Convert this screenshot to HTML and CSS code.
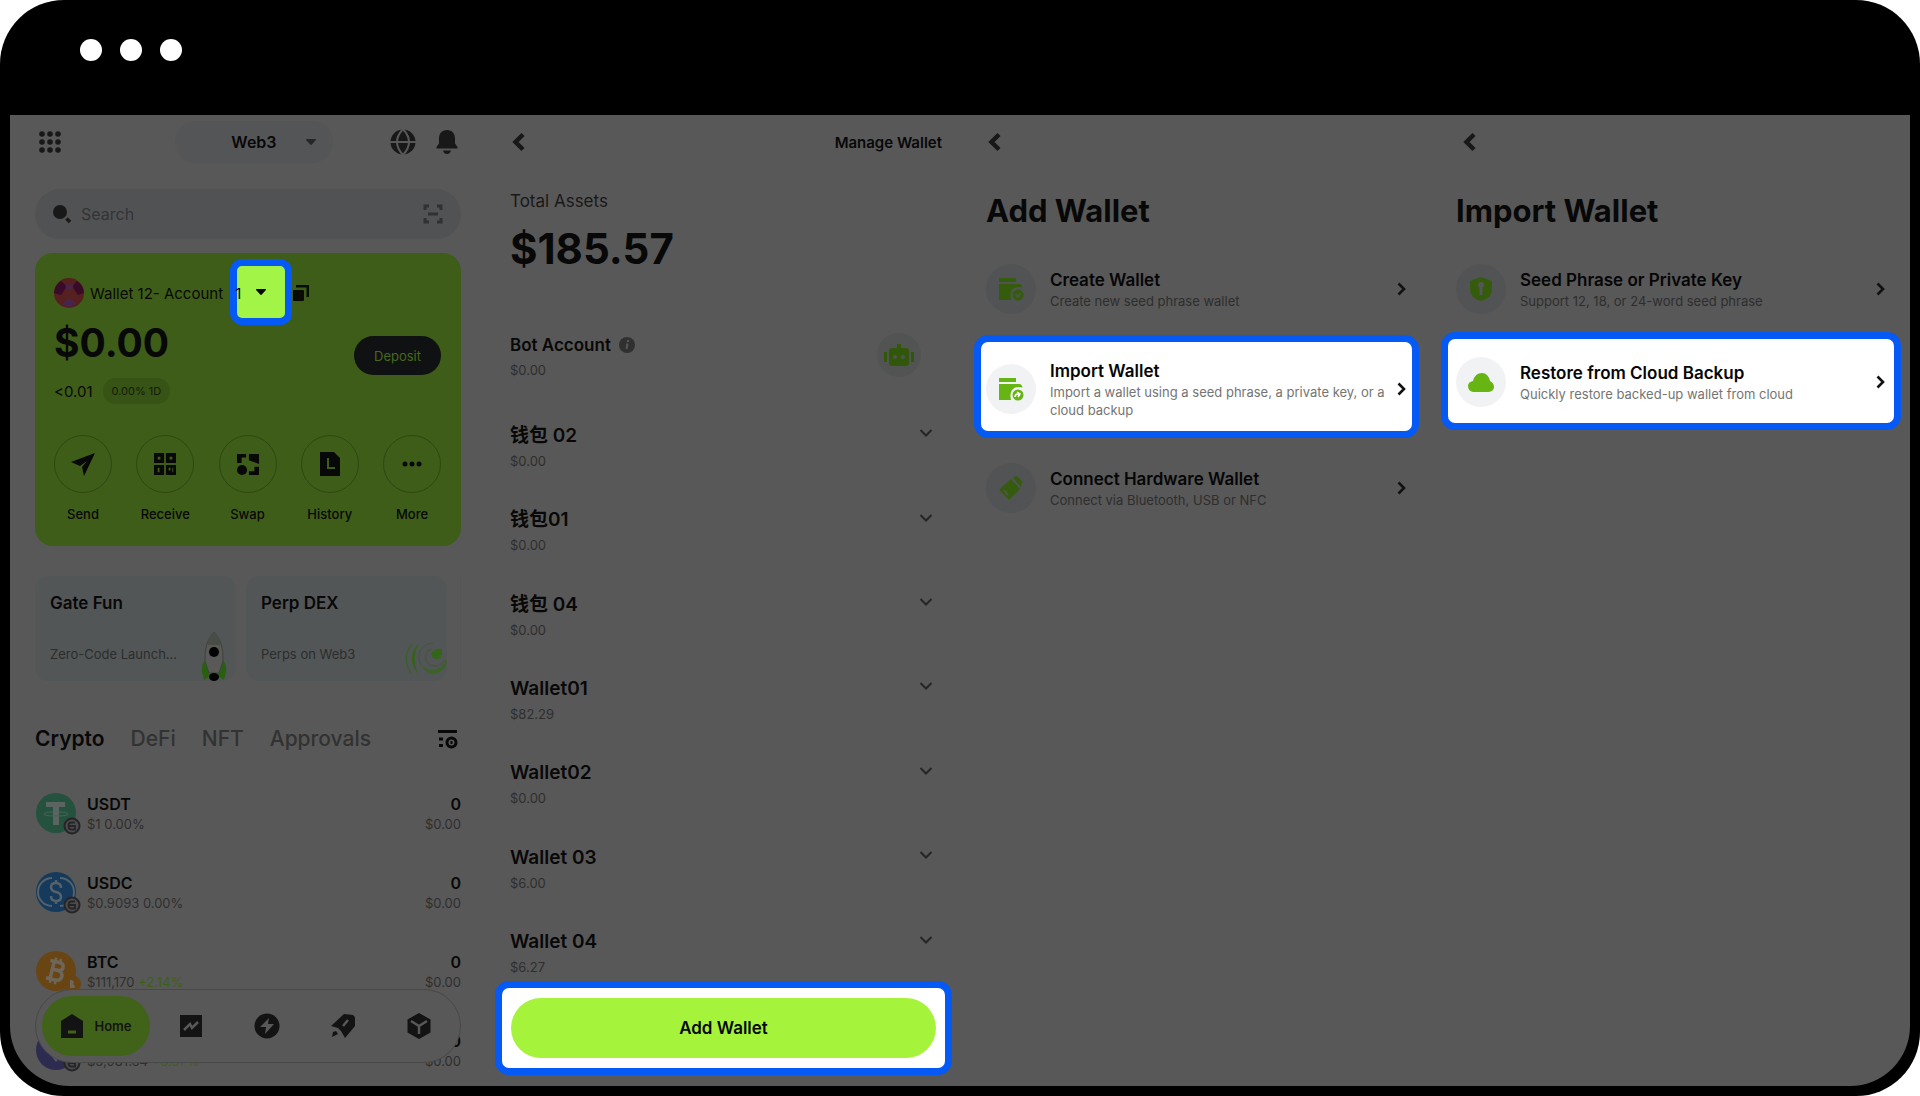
FILE: index.html
```html
<!DOCTYPE html>
<html lang="en">

<head>
    <meta charset="UTF-8">
    <meta name="viewport" content="width=device-width, initial-scale=1.0">
    <title>Import Wallet</title>
    <link rel="stylesheet" href="styles.css">
</head>

<body>
    <!-- shared icons -->
    <svg class="sprite" aria-hidden="true">
        <symbol id="back" viewBox="0 0 14 20"><path d="M11 2.500 3.500 10l7.500 7.500" fill="none" stroke="currentColor" stroke-width="4.500"/></symbol>
        <symbol id="next" viewBox="0 0 10 14"><path d="M1.500 1.500 7 7l-5.500 5.500" fill="none" stroke="currentColor" stroke-width="2.600"/></symbol>
        <symbol id="down" viewBox="0 0 14 10"><path d="M1.500 2 7 7.500 12.500 2" fill="none" stroke="currentColor" stroke-width="2"/></symbol>
        <symbol id="caret" viewBox="0 0 10 6"><path d="M.5 0h9q.8.600.2 1.300L5.800 5.600q-.8.700-1.600 0L.3 1.300Q-.3.600.5 0z" fill="currentColor"/></symbol>
        <symbol id="wallet" viewBox="0 0 26 26">
            <path d="M1 2h17v4H1zM1 8h20q3 0 3.500 3.500Q17 10 14 14q-2.500 4-1 10H1z" fill="currentColor"/>
            <circle cx="20" cy="19" r="5.500" fill="currentColor"/>
        </symbol>
        <symbol id="chain" viewBox="0 0 18 18">
            <circle cx="9" cy="9" r="7.500" fill="#4c4c4e" stroke="#252527" stroke-width="2"/>
            <path d="M12 5.500H8q-2.500 0-2.500 3.500T8 12.500h4V9H6" fill="none" stroke="#252527" stroke-width="1.800"/>
        </symbol>
    </svg>

    <div class="window">
        <div class="window-bar">
            <span class="dot"></span><span class="dot"></span><span class="dot"></span>
        </div>

        <main class="screens">
            <!-- Home -->
            <section class="screen home">
                <div class="topbar">
                    <button class="icon-btn" aria-label="Apps">
                        <svg width="22" height="22" viewBox="0 0 22 22" fill="currentColor"><circle cx="3" cy="3" r="2.800"/><circle cx="11" cy="3" r="2.800"/><circle cx="19" cy="3" r="2.800"/><circle cx="3" cy="11" r="2.800"/><circle cx="11" cy="11" r="2.800"/><circle cx="19" cy="11" r="2.800"/><circle cx="3" cy="19" r="2.800"/><circle cx="11" cy="19" r="2.800"/><circle cx="19" cy="19" r="2.800"/></svg>
                    </button>
                    <button class="mode">Web3 <svg width="10" height="6"><use href="#caret"/></svg></button>
                    <div class="topbar-end">
                        <button class="icon-btn" aria-label="Network">
                            <svg width="26" height="26" viewBox="0 0 26 26" fill="none" stroke="#585858" stroke-width="2"><circle cx="13" cy="13" r="12.500" fill="currentColor" stroke="none"/><path d="M13 0Q1 13 13 26 25 13 13 0zM0 13h26"/></svg>
                        </button>
                        <button class="icon-btn" aria-label="Notifications">
                            <svg width="22" height="26" viewBox="0 0 22 26" fill="currentColor"><path d="M11 1c5 0 8 3.500 8 8.500v5l2.500 3.500v1.500H.5V18L3 14.500v-5C3 4.500 6 1 11 1zM7 21.500h8q-1 3.500-4 3.500t-4-3.500z"/></svg>
                        </button>
                    </div>
                </div>

                <label class="search">
                    <svg width="20" height="20" viewBox="0 0 20 20"><circle cx="7" cy="8" r="7" fill="currentColor"/><path d="m13.500 14.500 3.500 3.500" stroke="currentColor" stroke-width="3.500"/></svg>
                    <input type="search" placeholder="Search" aria-label="Search">
                    <svg class="scan" width="20" height="20" viewBox="0 0 20 20" fill="none" stroke="currentColor" stroke-width="3"><path d="M2 6V2h4M14 2h4v4M18 14v4h-4M6 18H2v-4M5 10h10"/></svg>
                </label>

                <div class="balance-card">
                    <div class="account">
                        <svg width="30" height="30" viewBox="0 0 30 30"><circle cx="15" cy="15" r="15" fill="#55201f"/><path d="M0 15A15 15 0 0 1 7 3l6 5-6 9zM30 15a15 15 0 0 0-7-12l-5 5 6 9z" fill="#3a0a29"/><path d="M8 26q7-10 14 0-7 6-14 0z" fill="#47244a"/><path d="m11 5 4 3 5-3-2 6h-6z" fill="#47244a"/></svg>
                        <span class="account-name">Wallet 12- Account <span class="account-no">1</span></span>
                        <button class="account-switch" aria-label="Switch account"><svg width="10" height="6"><use href="#caret"/></svg></button>
                        <button class="icon-btn copy" aria-label="Copy address">
                            <svg width="16" height="16" viewBox="0 0 16 16" fill="currentColor"><rect y="5" width="11" height="11" rx="1"/><path d="M3 0h13v12h-2.500V2.500H3z"/></svg>
                        </button>
                    </div>
                    <div class="balance">
                        <div>
                            <div class="amount">$0.00</div>
                            <div class="change">&lt;0.01 <span class="badge">0.00% 1D</span></div>
                        </div>
                        <button class="deposit">Deposit</button>
                    </div>
                    <div class="actions">
                        <button class="action"><span class="ring"><svg width="24" height="24" viewBox="0 0 24 24" fill="currentColor"><path d="M24 1 13 24l-2-9 5-6-7 5-9-4z"/></svg></span>Send</button>
                        <button class="action"><span class="ring"><svg width="22" height="24" viewBox="0 0 24 24" fill="currentColor" fill-rule="evenodd"><path d="M0 0h11v11H0zM4 4v3h3V4zM13 0h11v11H13zM17 4v3h3V4zM0 13h11v11H0zM4 16v5h2v-5zM13 13h11v11H13zM16 16v3h2v-3zM20 16v5h1v-5z"/></svg></span>Receive</button>
                        <button class="action"><span class="ring"><svg width="22" height="24" viewBox="0 0 24 24" fill="currentColor"><path d="M0 1h10v4H5v6H0zM13 1h11v11l-5-2-6-2zM19 15h5v9H13v-4h6z"/><circle cx="5.500" cy="18.500" r="5.500"/></svg></span>Swap</button>
                        <button class="action"><span class="ring"><svg width="22" height="24" viewBox="0 0 22 24" fill="currentColor" fill-rule="evenodd"><path d="M1 0h14l6 6v18H1zM8 6v11h8v-2h-6V6z"/></svg></span>History</button>
                        <button class="action"><span class="ring"><svg width="20" height="6" viewBox="0 0 20 6" fill="currentColor"><circle cx="3" cy="3" r="2.500"/><circle cx="10" cy="3" r="2.500"/><circle cx="17" cy="3" r="2.500"/></svg></span>More</button>
                    </div>
                </div>

                <div class="promos">
                    <a class="promo" href="#">
                        <strong>Gate Fun</strong><span>Zero-Code Launch...</span>
                        <svg class="rocket" width="26" height="50" viewBox="0 0 26 50"><path d="M5 28q-5 5-4 13l2 8 6-4zM21 28q5 5 4 13l-2 8-6-4z" fill="#28600f"/><path d="M13 1q10 10 9 29l-4 12H8L4 30Q3 11 13 1z" fill="#595a58" stroke="#3d423b"/><path d="M13 1q5 4 7 13H6q2-9 7-13z" fill="#484e45"/><circle cx="13" cy="21" r="5" fill="#030303"/><ellipse cx="13" cy="46" rx="5" ry="4" fill="#030303"/></svg>
                    </a>
                    <a class="promo" href="#">
                        <strong>Perp DEX</strong><span>Perps on Web3</span>
                        <svg class="swirl" width="44" height="36" viewBox="0 0 44 36" fill="none"><path d="M7 3Q-4 17 6 32" stroke="#3a6029" stroke-width="1.500"/><path d="M14 2Q0 16 13 33 6 17 14 2z" fill="#36621f"/><path d="M28 2C15 3 11 15 16 24" stroke="#4a5446" stroke-width="1.500"/><path d="M16 24q9 16 23 4 3-4 3-10-6 11-14 11-7 0-12-5z" fill="#3b6329"/><path d="M27 8c-9 2-9 16 2 17 6 0 9-3 11-6" stroke="#4c5448" stroke-width="2"/><path d="M26 13q3-6 11-5 1 11-6 10-4-1-5-5z" fill="#34661a"/></svg>
                    </a>
                </div>

                <nav class="tabs">
                    <a class="current" href="#">Crypto</a>
                    <a href="#">DeFi</a>
                    <a href="#">NFT</a>
                    <a href="#">Approvals</a>
                    <button class="icon-btn" aria-label="Manage tokens">
                        <svg width="20" height="20" viewBox="0 0 20 20" fill="none" stroke="currentColor" stroke-width="3"><path d="M0 2.500h19M1 10h4M1 16.500h4"/><circle cx="13.500" cy="13.500" r="4.500"/><path d="M12.500 13.500h2"/></svg>
                    </button>
                </nav>

                <ul class="tokens">
                    <li>
                        <span class="coin">
                            <svg width="40" height="40" viewBox="0 0 40 40"><circle cx="20" cy="20" r="20" fill="#25513f"/><path d="M10 9h19v5h-6v18h-6V14h-7z" fill="#5c6461"/><path d="M17 19q-9 0-9 2t12 2 12-2-9-2" fill="none" stroke="#46645a"/></svg>
                            <svg class="chain" width="18" height="18"><use href="#chain"/></svg>
                        </span>
                        <span class="token-text"><strong>USDT</strong><small>$1 0.00%</small></span>
                        <span class="token-text value"><strong>0</strong><small>$0.00</small></span>
                    </li>
                    <li>
                        <span class="coin">
                            <svg width="40" height="40" viewBox="0 0 40 40" fill="none" stroke="#55616b"><circle cx="20" cy="20" r="20" fill="#163a5c" stroke="none"/><path d="M16 6a14 14 0 0 0 0 28M24 6a14 14 0 0 1 0 28" stroke-width="2"/><path d="M25 16q0-5-5-5t-5 4 5 5 5 5-5 4-5-5M20 8v4M20 28v4" stroke-width="2.500"/></svg>
                            <svg class="chain" width="18" height="18"><use href="#chain"/></svg>
                        </span>
                        <span class="token-text"><strong>USDC</strong><small>$0.9093 0.00%</small></span>
                        <span class="token-text value"><strong>0</strong><small>$0.00</small></span>
                    </li>
                    <li>
                        <span class="coin">
                            <svg width="40" height="40" viewBox="0 0 40 40"><circle cx="20" cy="20" r="20" fill="#694514"/><g transform="rotate(14 20 20)" fill="none" stroke="#6e6658" stroke-width="3.500"><path d="M16 11v18M12 11h9q5 0 5 4t-5 4h-5 6q5 1 5 5t-5 5H12"/><path d="M17 7v4M22 7v4M17 29v4M22 29v4" stroke-width="2.500"/></g></svg>
                            <svg class="chain" width="18" height="18" viewBox="0 0 18 18"><circle cx="9" cy="9" r="9" fill="#694514"/><path d="M7 5v8h4q2-2-1-4 2-2-1-4z" fill="#6e6658"/></svg>
                        </span>
                        <span class="token-text"><strong>BTC</strong><small>$111,170 <em>+2.14%</em></small></span>
                        <span class="token-text value"><strong>0</strong><small>$0.00</small></span>
                    </li>
                    <li>
                        <span class="coin">
                            <svg width="40" height="40" viewBox="0 0 40 40"><circle cx="20" cy="20" r="20" fill="#2d2b50"/><path d="m20 7 8 13-8 5-8-5zM13 23l7 4 7-4-7 9z" fill="#5a5a68"/></svg>
                            <svg class="chain" width="18" height="18"><use href="#chain"/></svg>
                        </span>
                        <span class="token-text"><strong>ETH</strong><small>$3,981.64 <em>+3.37%</em></small></span>
                        <span class="token-text value"><strong>0</strong><small>$0.00</small></span>
                    </li>
                </ul>

                <nav class="dock">
                    <a class="dock-home" href="#"><svg width="24" height="24" viewBox="0 0 24 24"><path d="m12 0 11 7v17H1V7z" fill="currentColor"/><path d="M8 18h8" stroke="#416319" stroke-width="3"/></svg>Home</a>
                    <div class="dock-links">
                        <a href="#" aria-label="Market"><svg width="24" height="24" viewBox="0 0 24 24"><path d="M1 1h22v22H1z" fill="currentColor"/><path d="m5 16 6-6 2 4 6-6" fill="none" stroke="#585858" stroke-width="2.500"/></svg></a>
                        <a href="#" aria-label="Trade"><svg width="26" height="26" viewBox="0 0 26 26"><circle cx="13" cy="13" r="12.500" fill="currentColor"/><path d="M15 5 6 14h6l-1 7 9-10h-6z" fill="#585858"/></svg></a>
                        <a href="#" aria-label="Launch"><svg width="26" height="26" viewBox="0 0 26 26"><path d="m14 1 9 1 2 2v9L15 25l-4-7-3-3-7-2z" fill="currentColor"/><path d="m2 24 1-5 3-1 2 3z" fill="currentColor"/><path d="m13 13 5-6" stroke="#585858" stroke-width="2.500"/></svg></a>
                        <a href="#" aria-label="Discover"><svg width="24" height="26" viewBox="0 0 24 26"><path d="m12 0 11.500 6.500v13L12 26 .5 19.500v-13z" fill="currentColor"/><path d="m4 8 8 5 8-5M12 13v8" fill="none" stroke="#585858" stroke-width="2.500"/></svg></a>
                    </div>
                </nav>
            </section>

            <!-- Wallet list -->
            <section class="screen manage">
                <div class="topbar">
                    <button class="icon-btn back" aria-label="Back"><svg width="14" height="20"><use href="#back"/></svg></button>
                    <a class="manage-link" href="#">Manage Wallet</a>
                </div>
                <div class="total-label">Total Assets</div>
                <div class="total">$185.57</div>
                <div class="bot">
                    <div class="wallet-text">
                        <strong>Bot Account <svg width="16" height="16" viewBox="0 0 16 16"><circle cx="8" cy="8" r="8" fill="#303030"/><path d="M9 3v2M8.500 6.500 7.500 12" stroke="#585858" stroke-width="2"/></svg></strong>
                        <small>$0.00</small>
                    </div>
                    <span class="bot-icon"><svg width="30" height="24" viewBox="0 0 30 24" fill="currentColor" fill-rule="evenodd"><path d="M13 1h4v4h5q3 0 3 3v12q0 3-3 3H8q-3 0-3-3V8q0-3 3-3h5zM9 14a2 2 0 1 0 4 0 2 2 0 0 0-4 0zM17 14a2 2 0 1 0 4 0 2 2 0 0 0-4 0zM0 9h3v10H0zM27 9h3v10h-3z"/></svg></span>
                </div>
                <ul class="wallets">
                    <li><div class="wallet-text"><strong>钱包 02</strong><small>$0.00</small></div><svg width="14" height="10"><use href="#down"/></svg></li>
                    <li><div class="wallet-text"><strong>钱包01</strong><small>$0.00</small></div><svg width="14" height="10"><use href="#down"/></svg></li>
                    <li><div class="wallet-text"><strong>钱包 04</strong><small>$0.00</small></div><svg width="14" height="10"><use href="#down"/></svg></li>
                    <li><div class="wallet-text"><strong>Wallet01</strong><small>$82.29</small></div><svg width="14" height="10"><use href="#down"/></svg></li>
                    <li><div class="wallet-text"><strong>Wallet02</strong><small>$0.00</small></div><svg width="14" height="10"><use href="#down"/></svg></li>
                    <li><div class="wallet-text"><strong>Wallet 03</strong><small>$6.00</small></div><svg width="14" height="10"><use href="#down"/></svg></li>
                    <li><div class="wallet-text"><strong>Wallet 04</strong><small>$6.27</small></div><svg width="14" height="10"><use href="#down"/></svg></li>
                </ul>
                <div class="add-bar"><button class="add-btn">Add Wallet</button></div>
            </section>

            <!-- Add wallet -->
            <section class="screen add">
                <div class="topbar">
                    <button class="icon-btn back" aria-label="Back"><svg width="14" height="20"><use href="#back"/></svg></button>
                </div>
                <h1>Add Wallet</h1>
                <a class="option" href="#">
                    <span class="option-icon"><svg width="26" height="26" viewBox="0 0 26 26"><use href="#wallet"/><path d="m17.500 18 2.500 3 2.500-4" fill="none" stroke="#525352" stroke-width="1.500"/></svg></span>
                    <span class="option-text"><strong>Create Wallet</strong><small>Create new seed phrase wallet</small></span>
                    <svg width="10" height="14"><use href="#next"/></svg>
                </a>
                <a class="option active" href="#">
                    <span class="option-icon"><svg width="26" height="26" viewBox="0 0 26 26"><use href="#wallet"/><path d="M17 21q0-3 4-3m-2-2 3 2-2 3" fill="none" stroke="#fff" stroke-width="1.500"/></svg></span>
                    <span class="option-text"><strong>Import Wallet</strong><small>Import a wallet using a seed phrase, a private key, or a cloud backup</small></span>
                    <svg width="10" height="14"><use href="#next"/></svg>
                </a>
                <a class="option" href="#">
                    <span class="option-icon"><svg width="26" height="26" viewBox="0 0 26 26"><path d="m13 4 9 10-10 10q-1 1-2 0l-8-8q-1-1 0-2zM15 3l2-1.500q1-1 2 0L24 6q1 1 0 2l-1 4z" fill="currentColor"/><path d="m6 15 4 5" stroke="#525352" stroke-width="2"/></svg></span>
                    <span class="option-text"><strong>Connect Hardware Wallet</strong><small>Connect via Bluetooth, USB or NFC</small></span>
                    <svg width="10" height="14"><use href="#next"/></svg>
                </a>
            </section>

            <!-- Import wallet -->
            <section class="screen import">
                <div class="topbar">
                    <button class="icon-btn back" aria-label="Back"><svg width="14" height="20"><use href="#back"/></svg></button>
                </div>
                <h1>Import Wallet</h1>
                <a class="option" href="#">
                    <span class="option-icon"><svg width="22" height="24" viewBox="0 0 22 24"><path d="m11 0 11 4v8q0 9-11 12Q0 21 0 12V4z" fill="currentColor"/><circle cx="11" cy="8" r="3" fill="#555"/><path d="M11 9v9" stroke="#555" stroke-width="3"/></svg></span>
                    <span class="option-text"><strong>Seed Phrase or Private Key</strong><small>Support 12, 18, or 24-word seed phrase</small></span>
                    <svg width="10" height="14"><use href="#next"/></svg>
                </a>
                <a class="option active" href="#">
                    <span class="option-icon"><svg width="26" height="20" viewBox="0 0 26 20"><path d="M5 20Q0 19 0 14q0-4 5-5 2-8 9-8 6 0 8 8 4 2 4 6 0 4-5 5z" fill="currentColor"/></svg></span>
                    <span class="option-text"><strong>Restore from Cloud Backup</strong><small>Quickly restore backed-up wallet from cloud</small></span>
                    <svg width="10" height="14"><use href="#next"/></svg>
                </a>
            </section>
        </main>
    </div>
</body>

</html>
```
FILE: styles.css
```css
* {
    box-sizing: border-box;
}

body {
    margin: 0;
    background: #fff;
    color: #080808;
    font-family: Inter, "Noto Sans CJK SC", sans-serif;
    font-size: 16px;
}

a {
    color: inherit;
    text-decoration: none;
}

button {
    padding: 0;
    border: 0;
    background: none;
    color: inherit;
    font: inherit;
    cursor: pointer;
}

ul {
    margin: 0;
    padding: 0;
    list-style: none;
}

svg {
    flex: none;
    display: block;
}

strong {
    font-weight: 600;
}

small {
    font-size: 13px;
    color: #2e2e2e;
}

.sprite {
    position: absolute;
    width: 0;
    height: 0;
}

.window {
    display: flex;
    flex-direction: column;
    height: 100vh;
    padding: 0 10px 10px;
    border-radius: 64px;
    background: #000;
    overflow: hidden;
}

.window-bar {
    display: flex;
    gap: 18px;
    flex: none;
    height: 115px;
    padding: 39px 70px;
}

.dot {
    width: 22px;
    height: 22px;
    border-radius: 50%;
    background: #fff;
}

.screens {
    flex: 1;
    display: grid;
    grid-template-columns: repeat(4, 1fr);
    min-height: 0;
    border-radius: 0 0 60px 60px;
    background: #585858;
    overflow: hidden;
}

.screen {
    position: relative;
    display: flex;
    flex-direction: column;
    min-width: 0;
    min-height: 0;
    padding: 0 24px 0 25px;
}

.topbar {
    display: flex;
    align-items: center;
    justify-content: space-between;
    flex: none;
    height: 54px;
}

.icon-btn {
    color: #181818;
}

.back {
    padding-left: 2px;
}

/* Home */
.home .topbar {
    padding: 0 3px 0 4px;
}

.mode {
    display: flex;
    align-items: center;
    justify-content: flex-end;
    gap: 29px;
    width: 158px;
    height: 42px;
    margin-left: 56px;
    padding-right: 17px;
    border-radius: 21px;
    background: #545557;
    font-weight: 600;
}

.mode svg {
    color: #262626;
}

.topbar-end {
    display: flex;
    gap: 20px;
}

.search {
    display: flex;
    align-items: center;
    flex: none;
    gap: 8px;
    height: 50px;
    margin-top: 20px;
    padding: 0 18px;
    border-radius: 25px;
    background: #515254;
    color: #181818;
}

.search input {
    flex: 1;
    min-width: 0;
    padding: 0;
    border: 0;
    outline: 0;
    background: none;
    font: inherit;
}

.search input::placeholder {
    color: #333435;
}

.scan {
    color: #303132;
}

.balance-card {
    flex: none;
    margin-top: 14px;
    padding: 24px 20px 22px 19px;
    border-radius: 18px;
    background: #3e5d18;
}

.account {
    position: relative;
    display: flex;
    align-items: center;
    gap: 6px;
    height: 32px;
}

.account-name {
    font-size: 15px;
}

.account-no {
    position: relative;
    z-index: 1;
    margin-left: 8px;
}

.account-switch {
    position: absolute;
    left: 176px;
    top: -18px;
    display: flex;
    align-items: center;
    justify-content: center;
    width: 62px;
    height: 66px;
    border: 7px solid #0559f4;
    border-radius: 12px;
    background: #a2f547;
}

.copy {
    margin-left: auto;
    margin-right: 132px;
    color: #080c04;
}

.balance {
    display: flex;
    justify-content: space-between;
    margin-top: 10px;
}

.amount {
    font-size: 39px;
    line-height: 48px;
    font-weight: 700;
}

.change {
    display: flex;
    align-items: center;
    gap: 10px;
    height: 26px;
    margin-top: 11px;
    font-size: 15px;
}

.badge {
    padding: 0 9px;
    border-radius: 13px;
    background: #385316;
    color: #131c09;
    font-size: 11px;
    line-height: 26px;
}

.deposit {
    width: 87px;
    height: 39px;
    margin-top: 17px;
    border-radius: 20px;
    background: #101112;
    color: #47691c;
    font-size: 13px;
}

.actions {
    display: flex;
    justify-content: space-between;
    margin-top: 31px;
}

.action {
    display: flex;
    flex-direction: column;
    align-items: center;
    gap: 11px;
    width: 58px;
    font-size: 13px;
    line-height: 20px;
    font-weight: 500;
}

.ring {
    display: flex;
    align-items: center;
    justify-content: center;
    width: 58px;
    height: 58px;
    border: 1px solid #2f4712;
    border-radius: 50%;
}

.promos {
    display: flex;
    flex: none;
    gap: 10px;
    margin-top: 30px;
    padding-right: 13px;
    border-right: 1px solid #535556;
}

.promo {
    position: relative;
    display: flex;
    flex: 1;
    flex-direction: column;
    justify-content: space-between;
    height: 105px;
    padding: 17px 15px;
    border-radius: 14px;
    background: #535657;
    font-size: 17px;
    line-height: 20px;
}

.promo span {
    color: #2b2d2d;
    font-size: 13px;
}

.rocket {
    position: absolute;
    right: 9px;
    bottom: 0;
}

.swirl {
    position: absolute;
    right: -2px;
    bottom: 4px;
}

.tabs {
    display: flex;
    flex: none;
    gap: 26px;
    margin-top: 44px;
    color: #323232;
    font-size: 21px;
    line-height: 28px;
    font-weight: 500;
}

.tabs .current {
    color: #080808;
    font-weight: 600;
}

.tabs .icon-btn {
    margin-left: auto;
    padding-right: 3px;
    color: #080808;
}

.tokens {
    margin-top: 20px;
}

.tokens li {
    display: flex;
    align-items: center;
    gap: 11px;
    height: 79px;
}

.coin {
    position: relative;
    margin-left: 1px;
}

.chain {
    position: absolute;
    right: -5px;
    bottom: -2px;
}

.token-text {
    display: flex;
    flex-direction: column;
    line-height: 22px;
}

.token-text small {
    line-height: 18px;
}

.token-text em {
    color: #3d6018;
    font-style: normal;
}

.value {
    margin-left: auto;
    text-align: right;
}

.dock {
    position: absolute;
    left: 25px;
    right: 24px;
    bottom: 23px;
    display: flex;
    align-items: center;
    gap: 29px;
    height: 74px;
    padding: 0 29px 0 6px;
    border: 1px solid #484848;
    border-radius: 37px;
    background: #585858;
    color: #131313;
}

.dock-home {
    display: flex;
    align-items: center;
    justify-content: center;
    gap: 10px;
    width: 108px;
    height: 60px;
    border-radius: 30px;
    background: #416319;
    font-size: 13px;
    font-weight: 600;
}

.dock-links {
    display: flex;
    flex: 1;
    align-items: center;
    justify-content: space-between;
}

/* Wallet list */
.manage {
    padding-bottom: 90px;
}

.manage-link {
    margin-right: -6px;
    font-size: 15px;
    font-weight: 600;
}

.total-label {
    margin-top: 20px;
    color: #181818;
    font-size: 17px;
    line-height: 24px;
}

.total {
    margin-top: 12px;
    font-size: 42px;
    line-height: 48px;
    font-weight: 700;
}

.bot {
    display: flex;
    justify-content: space-between;
    margin-top: 60px;
    padding-right: 15px;
    font-size: 17px;
}

.wallet-text {
    display: flex;
    flex-direction: column;
    gap: 3px;
}

.wallet-text strong {
    display: flex;
    align-items: center;
    gap: 8px;
    height: 24px;
    line-height: 24px;
}

.wallet-text small {
    line-height: 20px;
}

.bot-icon {
    display: flex;
    align-items: center;
    justify-content: center;
    width: 44px;
    height: 44px;
    border-radius: 50%;
    background: #525353;
    color: #31570b;
}

.wallets {
    flex: 1;
    display: flex;
    flex-direction: column;
    margin-top: 25px;
}

.wallets li {
    flex: 1;
    display: flex;
    align-items: center;
    justify-content: space-between;
    padding-right: 3px;
}

.wallets strong {
    font-size: 19px;
}

.wallets svg {
    margin-bottom: 28px;
    color: #252525;
}

.add-bar {
    position: absolute;
    left: 10px;
    right: 8px;
    bottom: 11px;
    padding: 10px 9px;
    border: 7px solid #0559f4;
    border-radius: 14px;
    background: #fff;
}

.add-btn {
    width: 100%;
    height: 60px;
    border-radius: 30px;
    background: #a5f43b;
    font-size: 17px;
    font-weight: 600;
}

/* Add / import wallet */
.add {
    padding: 0 28px 0 26px;
    --bleed: 12px;
}

.import {
    padding: 0 24px 0 21px;
    --bleed: 15px;
}

.import .back {
    padding-left: 7px;
}

h1 {
    margin: 22px 0 32px;
    font-size: 31px;
    line-height: 40px;
    font-weight: 700;
}

.option {
    display: flex;
    align-items: center;
    gap: 6px;
    min-height: 52px;
    color: #111;
}

.option-icon {
    display: flex;
    align-items: center;
    justify-content: center;
    flex: none;
    width: 50px;
    height: 50px;
    margin-right: 8px;
    border-radius: 50%;
    background: #525354;
    color: #355c0c;
}

.option-text {
    display: flex;
    flex: 1;
    flex-direction: column;
    font-size: 17px;
    line-height: 24px;
}

.option-text strong {
    color: #060606;
}

.option-text small {
    line-height: 18px;
}

.option.active {
    margin: 20px calc(0px - var(--bleed)) 24px;
    padding: 17px calc(var(--bleed) - 7px) 12px;
    border: 7px solid #0559f4;
    border-radius: 14px;
    background: #fff;
}

.import .option.active {
    margin-top: 17px;
    padding-top: 18px;
    padding-bottom: 16px;
}

.active .option-icon {
    background: #f1f2f4;
    color: #66b512;
}

.active small {
    color: #747474;
}
```
